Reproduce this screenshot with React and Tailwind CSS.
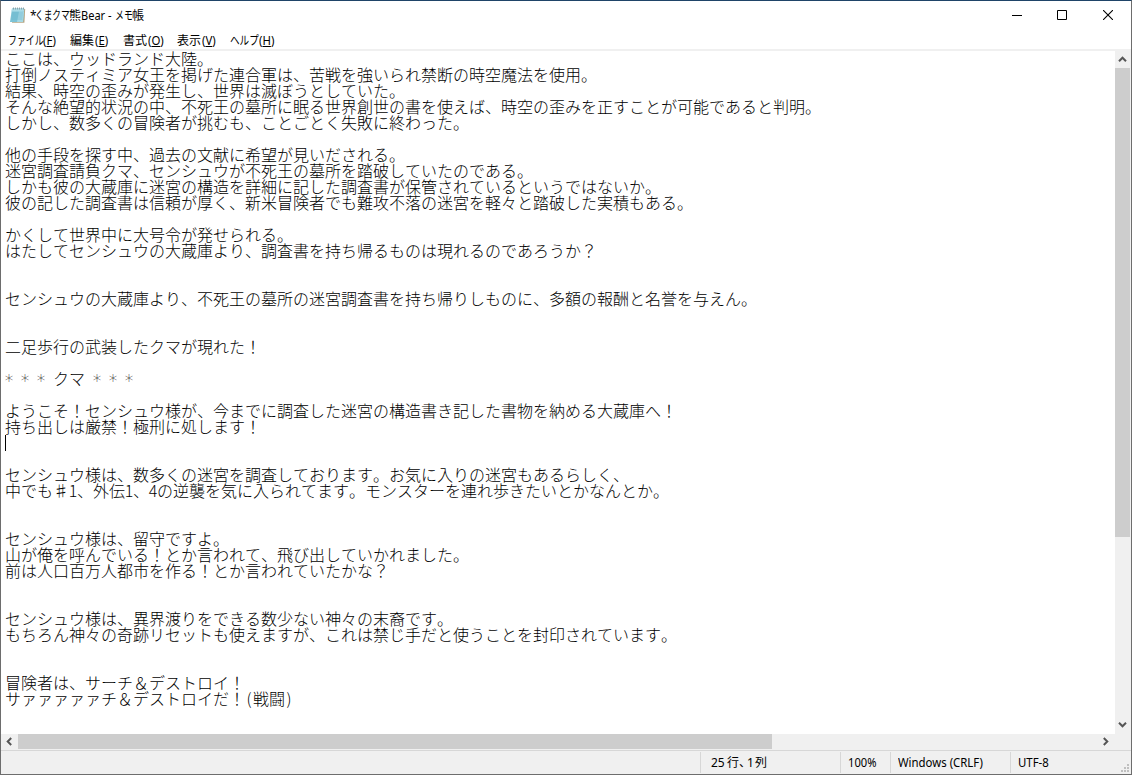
import React from "react";

const LINES = [
  "ここは、ウッドランド大陸。",
  "打倒ノスティミア女王を掲げた連合軍は、苦戦を強いられ禁断の時空魔法を使用。",
  "結果、時空の歪みが発生し、世界は滅ぼうとしていた。",
  "そんな絶望的状況の中、不死王の墓所に眠る世界創世の書を使えば、時空の歪みを正すことが可能であると判明。",
  "しかし、数多くの冒険者が挑むも、ことごとく失敗に終わった。",
  "",
  "他の手段を探す中、過去の文献に希望が見いだされる。",
  "迷宮調査請負クマ、センシュウが不死王の墓所を踏破していたのである。",
  "しかも彼の大蔵庫に迷宮の構造を詳細に記した調査書が保管されているというではないか。",
  "彼の記した調査書は信頼が厚く、新米冒険者でも難攻不落の迷宮を軽々と踏破した実積もある。",
  "",
  "かくして世界中に大号令が発せられる。",
  "はたしてセンシュウの大蔵庫より、調査書を持ち帰るものは現れるのであろうか？",
  "",
  "",
  "センシュウの大蔵庫より、不死王の墓所の迷宮調査書を持ち帰りしものに、多額の報酬と名誉を与えん。",
  "",
  "",
  "二足歩行の武装したクマが現れた！",
  "",
  "* * * クマ * * *",
  "",
  "ようこそ！センシュウ様が、今までに調査した迷宮の構造書き記した書物を納める大蔵庫へ！",
  "持ち出しは厳禁！極刑に処します！",
  "|",
  "",
  "センシュウ様は、数多くの迷宮を調査しております。お気に入りの迷宮もあるらしく、",
  "中でも♯1、外伝1、4の逆襲を気に入られてます。モンスターを連れ歩きたいとかなんとか。",
  "",
  "",
  "センシュウ様は、留守ですよ。",
  "山が俺を呼んでいる！とか言われて、飛び出していかれました。",
  "前は人口百万人都市を作る！とか言われていたかな？",
  "",
  "",
  "センシュウ様は、異界渡りをできる数少ない神々の末裔です。",
  "もちろん神々の奇跡リセットも使えますが、これは禁じ手だと使うことを封印されています。",
  "",
  "",
  "冒険者は、サーチ＆デストロイ！",
  "サァァァァァチ＆デストロイだ！(戦闘)",
];

// Half-width characters take one 8px cell, full-width ones take 16px.
function Line({ text }) {
  if (text === "|") {
    return (
      <div className="flex h-4">
        <span className="mt-px h-4 w-px bg-black" />
      </div>
    );
  }
  const parts = text.split(/([\x20-\x7e♯])/).filter(Boolean);
  return (
    <div className="flex h-4 whitespace-pre">
      {parts.map((p, i) =>
        p === "*" ? (
          <span key={i} className="flex w-2 shrink-0 justify-center pt-[3px] font-['DejaVu_Sans'] text-[17px] font-extralight">*</span>
        ) : /^[\x20-\x7e]$/.test(p) ? (
          <span key={i} className="flex w-2 shrink-0 justify-center">{p}</span>
        ) : p === "♯" ? (
          <span key={i} className="w-4 shrink-0 text-center">{p}</span>
        ) : (
          <span key={i} className="shrink-0">{p}</span>
        )
      )}
    </div>
  );
}

const MENU = [
  { label: "ファイル", k: "F", box: "w-[62px]", word: "w-[35px]", scale: "scale-x-[0.74]" },
  { label: "編集", k: "E", box: "w-[53px]", word: "w-[25px]", scale: "scale-x-100" },
  { label: "書式", k: "O", box: "w-[54px]", word: "w-[25px]", scale: "scale-x-100" },
  { label: "表示", k: "V", box: "w-[53px]", word: "w-[25px]", scale: "scale-x-100" },
  { label: "ヘルプ", k: "H", box: "w-[60px]", word: "w-[29px]", scale: "scale-x-[0.8]" },
];

function Chevron({ className }) {
  return (
    <svg width="9" height="9" viewBox="0 0 9 9" className={className} fill="none" stroke="#555" strokeWidth="2">
      <path d="M1 6.2 4.5 2.7 8 6.2" />
    </svg>
  );
}

function NotepadIcon() {
  return (
    <svg width="17" height="17" viewBox="0 0 17 17" className="shrink-0">
      <path d="M4 2h12.2l-.8 13.8H3z" fill="#b5a685" />
      <path d="M3 1.5h12.2L14 15H1z" fill="#7cc3d6" />
      <path d="M3 1.5h12.2l-.2 3H2.7z" fill="#a9dbe6" />
      <path d="M10 4.5h5L14 15H8z" fill="#a5d9e5" />
      <path d="M3.2 6h10.8M3 8h10.8M2.6 10h11M2.4 12h11" stroke="#66b4c9" strokeWidth=".6" />
      <path d="M4.5.5v2M6.5.5v2M8.5.5v2M10.5.5v2M12.5.5v2M14.5.5v2" stroke="#7d9298" strokeWidth=".8" />
    </svg>
  );
}

export default function App() {
  return (
    <div className="flex h-[775px] w-[1132px] flex-col overflow-hidden border border-[#6d6d6d] border-t-[#1f4468] bg-white font-['Noto_Sans','Noto_Sans_CJK_JP',sans-serif] text-[12px] text-black">
      <header className="flex h-[29px] shrink-0 items-center">
        <div className="ml-2 flex h-full items-center">
          <NotepadIcon />
        </div>
        <div className="ml-1 flex flex-1 items-center whitespace-pre leading-4">
          <span className="w-[5px]">*</span>
          <span className="w-[34px]"><span className="inline-block origin-left scale-x-[0.72]">くまクマ</span></span>
          <span className="w-[12px]">熊</span>
          <span className="w-[34px] origin-left scale-x-[0.92]">Bear -</span>
          <span className="w-[17px]"><span className="inline-block origin-left scale-x-[0.74]">メモ</span></span>
          <span>帳</span>
        </div>
        <div className="flex h-full items-center">
          <div className="flex w-[46px] justify-center pl-px"><svg width="10" height="10"><path d="M0 4.5h10" stroke="#000" /></svg></div>
          <div className="flex w-[46px] justify-center pb-px"><svg width="10" height="10"><path d="M.5.5h9v9h-9z" fill="none" stroke="#000" /></svg></div>
          <div className="flex w-[46px] justify-center pb-px"><svg width="10" height="10"><path d="m0 0 10 10M10 0 0 10" stroke="#000" strokeWidth="1.1" /></svg></div>
        </div>
      </header>
      <nav className="flex h-[19px] shrink-0 items-center pl-[7px] pt-[3px] leading-4">
        {MENU.map((m) => (
          <div key={m.k} className={`flex shrink-0 whitespace-nowrap ${m.box}`}>
            <span className={`shrink-0 ${m.word}`}><span className={`inline-block origin-left ${m.scale}`}>{m.label}</span></span>
            <span className="shrink-0 origin-left scale-x-95">(<u className="underline-offset-1">{m.k}</u>)</span>
          </div>
        ))}
      </nav>
      <div className="flex h-[685px] shrink-0 border-t-2 border-[#f0f0f0]">
        <main className="-mt-px h-[684px] w-[1114px] shrink-0 overflow-hidden pl-1 font-['Noto_Sans_CJK_JP',sans-serif] text-[16px] font-light leading-4 [font-kerning:none]">
          {LINES.map((t, i) => <Line key={i} text={t} />)}
        </main>
        <div className="flex w-4 shrink-0 flex-col bg-[#f0f0f0]">
          <div className="flex h-[17px] w-[15px] shrink-0 items-center justify-center"><Chevron /></div>
          <div className="h-[469px] w-[15px] shrink-0 bg-[#cdcdcd]" />
          <div className="flex w-[15px] flex-1 items-end justify-center pb-[5px]"><Chevron className="rotate-180" /></div>
        </div>
      </div>
      <div className="flex h-[15px] shrink-0 bg-[#f0f0f0]">
        <div className="flex w-[17px] items-center justify-center"><Chevron className="-rotate-90" /></div>
        <div className="w-[754px] bg-[#cdcdcd]" />
        <div className="flex flex-1 items-center justify-end pr-[21px]"><Chevron className="rotate-90" /></div>
      </div>
      <footer className="flex flex-1 border-t border-[#f0f0f0] bg-[#f0f0f0]">
        <div className="flex flex-1 border-t border-[#d7d7d7] leading-4">
          <div className="w-[699px]" />
          <div className="my-px flex w-[140px] items-center whitespace-pre border-l border-[#d7d7d7] pl-[10px]">
            <span className="w-[16px]">25</span><span className="w-[12px]">行</span><span className="w-[8px]">、</span><span className="w-[8px]">1</span><span>列</span>
          </div>
          <div className="my-px flex w-[50px] items-center border-l border-[#d7d7d7] pl-[7px]"><span className="origin-left scale-x-[0.93]">100%</span></div>
          <div className="my-px flex w-[120px] items-center whitespace-nowrap border-l border-[#d7d7d7] pl-[7px]"><span className="origin-left scale-x-95">Windows (CRLF)</span></div>
          <div className="my-px flex flex-1 items-center border-l border-[#d7d7d7] pl-[7px]"><span className="origin-left scale-x-95">UTF-8</span></div>
          <svg width="11" height="11" className="self-end" fill="#bfbfbf">
            <path d="M7 1h2v2H7zM4 4h2v2H4zM7 4h2v2H7zM1 7h2v2H1zM4 7h2v2H4zM7 7h2v2H7z" />
          </svg>
        </div>
      </footer>
    </div>
  );
}
